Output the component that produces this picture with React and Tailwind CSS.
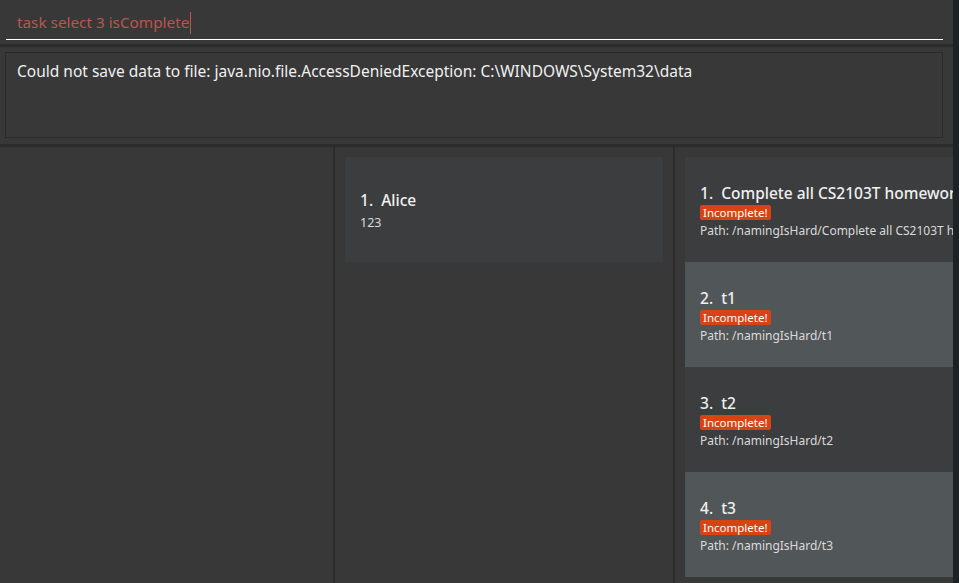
import React from 'react';

const persons = [{ name: 'Alice', phone: '123' }];

const tasks = [
  { title: 'Complete all CS2103T homework', path: '/namingIsHard/Complete all CS2103T homework' },
  { title: 't1', path: '/namingIsHard/t1' },
  { title: 't2', path: '/namingIsHard/t2' },
  { title: 't3', path: '/namingIsHard/t3' },
];

const font = { fontFamily: '"Noto Sans", "Open Sans", sans-serif' };

function TaskCard({ task, index }) {
  const odd = index % 2 === 1;
  return (
    <div className={`h-[105px] shrink-0 flex flex-col justify-center pl-[15px] pt-[4px] whitespace-nowrap overflow-hidden ${odd ? 'bg-[#515658]' : 'bg-[#3c3d3f]'}`}>
      <div className="text-[15.5px] leading-[20px] font-medium text-[#f0f0f0]">
        {index + 1}.&nbsp; {task.title}
      </div>
      <div className="flex mt-[2px]">
        <span className="bg-[#d84315] text-white text-[11.5px] leading-[15px] px-[3px] rounded-[2px]">Incomplete!</span>
      </div>
      <div className="text-[12px] leading-[21px] text-[#dadada]">Path: {task.path}</div>
    </div>
  );
}

export default function App() {
  return (
    <div className="w-[959px] h-[583px] bg-[#1d2225] flex overflow-hidden" style={font}>
      <div className="w-[953px] h-full flex flex-col gap-[3px] bg-[#2c2c2c]">
        <div className="h-[44px] shrink-0 bg-[#383838] pl-[6px] pr-[10px] pt-[6px]">
          <div className="h-[34px] border-b border-white flex items-center pl-[11px]">
            <span className="text-[15.3px] text-[#b8574a]">task select 3 isComplete</span>
            <span className="w-[1px] h-[22px] bg-[#b8574a] ml-[1px]" />
          </div>
        </div>
        <div className="h-[97px] shrink-0 bg-[#383838] pl-[5px] pr-[10px] pt-[5px] pb-[6px]">
          <div className="h-full border border-[#2a2a2a] pl-[11px] pt-[7px] text-[15.5px] text-[#f0f0f0]">
            Could not save data to file: java.nio.file.AccessDeniedException: C:\WINDOWS\System32\data
          </div>
        </div>
        <div className="flex-1 flex gap-[2px] min-h-0">
          <div className="w-[333px] bg-[#383838]" />
          <div className="w-[338px] bg-[#383838] p-[10px]">
            {persons.map((p, i) => (
              <div key={p.name} className="h-[105px] bg-[#3c3d3f] flex flex-col justify-center pl-[15px] pt-[3px]">
                <div className="text-[15.5px] leading-[22px] font-medium text-[#f0f0f0]">
                  {i + 1}.&nbsp; {p.name}
                </div>
                <div className="text-[12.5px] leading-[20px] mt-[2px] text-[#dadada]">{p.phone}</div>
              </div>
            ))}
          </div>
          <div className="flex-1 bg-[#383838] pl-[10px] pt-[10px] flex flex-col overflow-hidden">
            {tasks.map((t, i) => (
              <TaskCard key={i} task={t} index={i} />
            ))}
          </div>
        </div>
      </div>
    </div>
  );
}
